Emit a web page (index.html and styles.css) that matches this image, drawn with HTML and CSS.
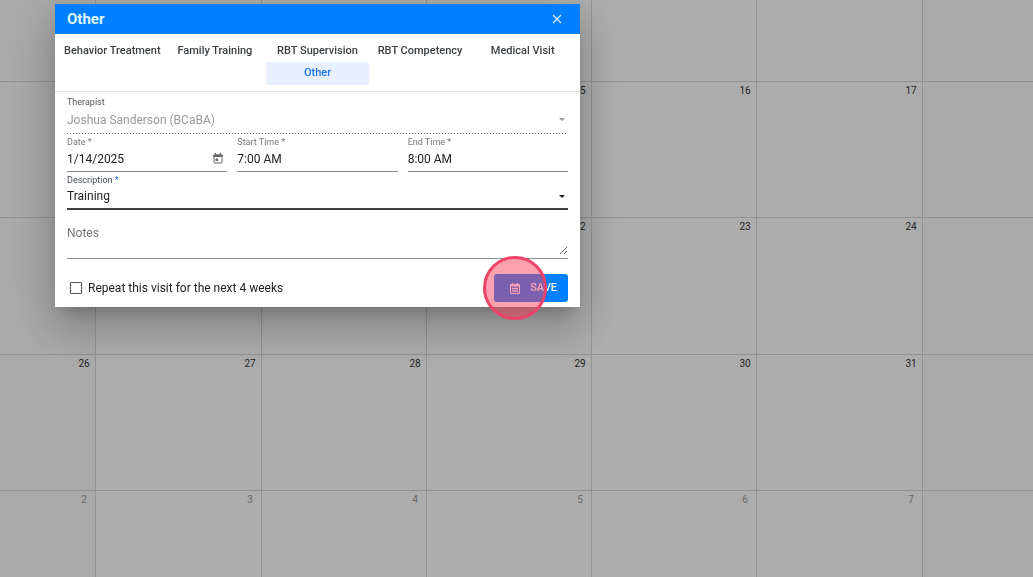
FILE: index.html
```html
<!DOCTYPE html>
<html lang="en">
<head>
<meta charset="utf-8">
<meta name="viewport" content="width=device-width, initial-scale=1">
<title>Schedule</title>
<link rel="stylesheet" href="styles.css">
</head>
<body>
<main class="calendar">
  <div class="day weekend"></div><div class="day"></div><div class="day"></div><div class="day"></div><div class="day"></div><div class="day"></div><div class="day weekend"></div>
  <div class="day weekend"><span class="num">12</span></div><div class="day"><span class="num">13</span></div><div class="day"><span class="num">14</span></div><div class="day"><span class="num">15</span></div><div class="day"><span class="num">16</span></div><div class="day"><span class="num">17</span></div><div class="day weekend"></div>
  <div class="day weekend"><span class="num">19</span></div><div class="day"><span class="num">20</span></div><div class="day"><span class="num">21</span></div><div class="day"><span class="num">22</span></div><div class="day"><span class="num">23</span></div><div class="day"><span class="num">24</span></div><div class="day weekend"></div>
  <div class="day weekend"><span class="num">26</span></div><div class="day"><span class="num">27</span></div><div class="day"><span class="num">28</span></div><div class="day"><span class="num">29</span></div><div class="day"><span class="num">30</span></div><div class="day"><span class="num">31</span></div><div class="day weekend"></div>
  <div class="day weekend other"><span class="num">2</span></div><div class="day other"><span class="num">3</span></div><div class="day other"><span class="num">4</span></div><div class="day other"><span class="num">5</span></div><div class="day other"><span class="num">6</span></div><div class="day other"><span class="num">7</span></div><div class="day weekend"></div>
</main>

<div class="backdrop">
  <section class="dialog" role="dialog" aria-labelledby="dialog-title">
    <header class="dialog-header">
      <h1 class="dialog-title" id="dialog-title">Other</h1>
      <button class="close" type="button" aria-label="Close">
        <svg width="10" height="10" viewBox="0 0 10 10"><path d="M1 1l8 8M9 1L1 9" fill="none" stroke="currentColor" stroke-width="1.2"/></svg>
      </button>
    </header>
    <nav class="tabs" aria-label="Visit type">
      <button class="tab" type="button">Behavior Treatment</button>
      <button class="tab" type="button">Family Training</button>
      <button class="tab" type="button">RBT Supervision</button>
      <button class="tab" type="button">RBT Competency</button>
      <button class="tab" type="button">Medical Visit</button>
      <span></span>
      <span></span>
      <button class="tab active" type="button">Other</button>
    </nav>
    <form class="form">
      <div class="field disabled">
        <label class="label" for="therapist">Therapist</label>
        <div class="control">
          <select class="input" id="therapist" disabled><option>Joshua Sanderson (BCaBA)</option></select>
          <svg class="caret" width="6" height="3" viewBox="0 0 6 3"><path d="M0 0h6L3 3z" fill="currentColor"/></svg>
        </div>
      </div>
      <div class="row">
        <div class="field">
          <label class="label" for="date">Date *</label>
          <div class="control">
            <input class="input" id="date" type="text" value="1/14/2025">
            <button class="picker" type="button" aria-label="Open calendar">
              <svg width="10" height="11" viewBox="0 0 10 11"><path d="M1 2v7.500q0 .5.500.5h7q.5 0 .5-.5V2z" fill="none" stroke="currentColor"/><path d="M.5 1.500h9V4h-9zM2 0h1v2H2zM7 0h1v2H7zM2.500 5.500h2.500V8H2.500z" fill="currentColor"/></svg>
            </button>
          </div>
        </div>
        <div class="field">
          <label class="label" for="start">Start Time *</label>
          <div class="control"><input class="input" id="start" type="text" value="7:00 AM"></div>
        </div>
        <div class="field">
          <label class="label" for="end">End Time *</label>
          <div class="control"><input class="input" id="end" type="text" value="8:00 AM"></div>
        </div>
      </div>
      <div class="field focused">
        <label class="label" for="description">Description <span class="required">*</span></label>
        <div class="control">
          <select class="input" id="description"><option>Training</option></select>
          <svg class="caret" width="6" height="3" viewBox="0 0 6 3"><path d="M0 0h6L3 3z" fill="currentColor"/></svg>
        </div>
      </div>
      <div class="notes">
        <textarea class="notes-input" placeholder="Notes" aria-label="Notes"></textarea>
      </div>
      <footer class="actions">
        <label class="repeat"><input class="checkbox" type="checkbox">Repeat this visit for the next 4 weeks</label>
        <div class="save-wrap">
          <button class="save" type="button">
            <svg width="10" height="11" viewBox="0 0 10 11"><path d="M.5 1.500h9v9h-9z" fill="none" stroke="currentColor"/><path d="M1 2h8v1.500H1zM2 0h1v2H2zM7 0h1v2H7z" fill="currentColor"/><path d="M2 5.500h6M2 8h6" stroke="currentColor" stroke-width="1.300"/></svg>
            SAVE
          </button>
          <span class="click-marker"></span>
        </div>
      </footer>
    </form>
  </section>
</div>
</body>
</html>
```
FILE: styles.css
```css
* { box-sizing: border-box; }

body {
  margin: 0;
  font-family: Roboto, "Liberation Sans", sans-serif;
  font-size: 12px;
  color: #222;
  background: #fff;
}

button, input, select, textarea { font: inherit; color: inherit; }

button {
  border: 0;
  padding: 0;
  background: none;
  cursor: pointer;
}

svg { display: block; }

.calendar {
  display: grid;
  grid-template-columns: 96fr 166fr 165fr 165fr 165fr 166fr 110fr;
  grid-template-rows: 82px 136px 137px 136px 1fr;
  min-height: 100vh;
}

.day {
  display: flex;
  justify-content: flex-end;
  align-items: flex-start;
  border-right: 1px solid #d8d8d8;
  border-bottom: 1px solid #d8d8d8;
}

.day:nth-child(7n) { border-right: 0; }
.day:nth-child(n + 29) { border-bottom: 0; }
.weekend { background: #fbfbfb; }

.num {
  width: 22px;
  text-align: center;
  font-size: 10px;
  line-height: 18px;
  color: #333;
}

.other .num { color: #999; }

.backdrop {
  position: fixed;
  inset: 0;
  display: flex;
  align-items: flex-start;
  padding: 4px 0 0 55px;
  background: rgba(0, 0, 0, 0.32);
}

.dialog {
  width: 525px;
  max-width: 100%;
  background: #fff;
  box-shadow:
    0 11px 15px -7px rgba(0, 0, 0, 0.2),
    0 24px 38px 3px rgba(0, 0, 0, 0.14),
    0 9px 46px 8px rgba(0, 0, 0, 0.12);
}

.dialog-header {
  display: flex;
  align-items: center;
  justify-content: space-between;
  padding: 0 16px 0 12px;
  line-height: 30px;
  color: #dff5ff;
  background: #007fff;
}

.dialog-title {
  margin: 0;
  font-size: 15px;
  font-weight: 700;
}

.close { padding: 2px; }

.tabs {
  display: grid;
  grid-template-columns: repeat(5, 1fr);
  padding: 5px 6px 6px;
  border-bottom: 1px solid #ddd;
}

.tab {
  border-radius: 2px;
  font-size: 11px;
  font-weight: 500;
  line-height: 23px;
  color: #3c4043;
  white-space: nowrap;
}

.tab.active {
  color: #1a73e8;
  background: #e8f0fe;
  line-height: 21px;
  padding-bottom: 2px;
}

.form {
  display: flex;
  flex-direction: column;
  gap: 2px;
  padding: 4px 12px 5px;
}

.row {
  display: flex;
  gap: 10px;
}

.field {
  flex: 1;
  min-width: 0;
}

.label {
  display: block;
  font-size: 9px;
  line-height: 12px;
  color: #777;
}

.control {
  display: flex;
  align-items: center;
  height: 24px;
  padding-bottom: 2px;
  border-bottom: 1px solid #8c8c8c;
}

.input {
  flex: 1;
  min-width: 0;
  height: 20px;
  padding: 0;
  border: 0;
  outline: 0;
  background: none;
  appearance: none;
}

.caret { margin-right: 3px; }

.picker {
  margin-right: 4px;
  color: #666;
}

.disabled .label { color: #555; }

.disabled .control {
  height: 26px;
  padding-bottom: 3px;
  color: #999;
  border-bottom: 0;
  background: repeating-linear-gradient(to right, #777 0 1px, transparent 1px 3px) left bottom / 100% 1px no-repeat;
}

.disabled .input {
  color: #999;
  opacity: 1;
}

.focused .label { color: #444b55; }
.focused .control { border-bottom: 2px solid #3c4043; }
.required { color: #1a73e8; }

.notes {
  margin-top: 12px;
  padding-bottom: 3px;
  border-bottom: 1px solid #8c8c8c;
}

.notes-input {
  display: block;
  width: 100%;
  height: 31px;
  padding: 0;
  border: 0;
  outline: 0;
  background: none;
  line-height: 18px;
  resize: vertical;
}

.notes-input::placeholder { color: #777; }

.actions {
  display: flex;
  align-items: center;
  justify-content: space-between;
  margin-top: 13px;
}

.repeat {
  display: flex;
  align-items: center;
  gap: 6px;
  padding-left: 3px;
}

.checkbox {
  width: 12px;
  height: 12px;
  margin: 0;
  border: 1px solid #555;
  border-radius: 1px;
  appearance: none;
}

.save-wrap { position: relative; }

.save {
  display: flex;
  align-items: center;
  gap: 10px;
  padding: 0 11px 0 16px;
  border-radius: 3px;
  font-size: 11px;
  font-weight: 500;
  line-height: 28px;
  color: #fff;
  background: #007fff;
}

.click-marker {
  position: absolute;
  top: -18px;
  left: -11px;
  width: 64px;
  height: 64px;
  border: 3px solid #ec4468;
  border-radius: 50%;
  background: rgba(245, 65, 95, 0.5);
  pointer-events: none;
}
```
